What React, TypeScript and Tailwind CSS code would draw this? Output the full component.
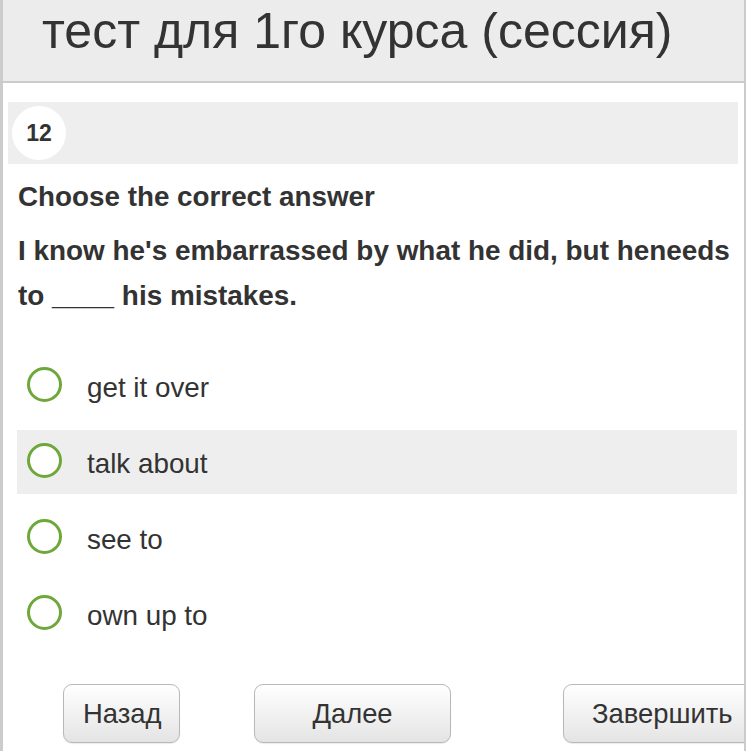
const options = ['get it over', 'talk about', 'see to', 'own up to'];

function Radio() {
  return <span className="mb-[4px] block h-[35px] w-[35px] shrink-0 rounded-full border-[3px] border-[#6fa83a] bg-white" />;
}

function Button({ label, className }: { label: string; className?: string }) {
  return (
    <button
      className={
        'h-[59px] shrink-0 rounded-[9px] border-[1.5px] border-[#b8b8b8] bg-gradient-to-b from-white to-[#e4e4e4] px-[19px] text-[27.4px] text-[#333] shadow-[0_1px_1px_rgba(0,0,0,0.08)] ' +
        (className ?? '')
      }
    >
      {label}
    </button>
  );
}

export default function App() {
  return (
    <div
      className="h-[751px] w-[746px] overflow-hidden border-r-2 border-l-[3px] border-[#cccccc] bg-white text-[#333]"
      style={{ fontFamily: '"Liberation Sans", Arial, sans-serif' }}
    >
      {/* Header */}
      <div className="h-[83px] border-b-2 border-[#cccccc] bg-[#ececec] pl-[39px] pt-[6px]">
        <h1 className="text-[50px] leading-[50px] whitespace-nowrap">тест для 1го курса (сессия)</h1>
      </div>

      <div className="pl-[5px] pr-[3px] pt-[19px]">
        {/* Question number bar */}
        <div className="flex h-[62px] w-[730px] items-center bg-[#eeeeee] px-[4px]">
          <div className="flex h-[54px] w-[54px] items-center justify-center rounded-full bg-white text-[23px] font-bold">
            12
          </div>
        </div>

        <div className="px-[10px]">
          <p className="mt-[10px] text-[27.8px] font-bold leading-[45px]">Choose the correct answer</p>
          <p className="mt-[9px] w-[720px] text-[27.9px] font-bold leading-[45px]">
            I know he's embarrassed by what he did, but heneeds to ____ his mistakes.
          </p>
        </div>

        {/* Options */}
        <div className="ml-[9px] mt-[36px] flex w-[720px] flex-col gap-[12px]">
          {options.map((o, i) => (
            <div
              key={o}
              className={'flex h-[64px] items-center pl-[10px] ' + (i === 1 ? 'bg-[#eeeeee]' : '')}
            >
              <Radio />
              <span className="ml-[25px] mt-[3px] text-[27.8px]">{o}</span>
            </div>
          ))}
        </div>

        {/* Buttons */}
        <div className="mt-[38px] flex items-start pl-[55px]">
          <Button label="Назад" className="w-[117px] px-0" />
          <Button label="Далее" className="ml-[74px] w-[197px]" />
          <Button label="Завершить" className="ml-[112px] px-[28px]" />
        </div>
      </div>
    </div>
  );
}
